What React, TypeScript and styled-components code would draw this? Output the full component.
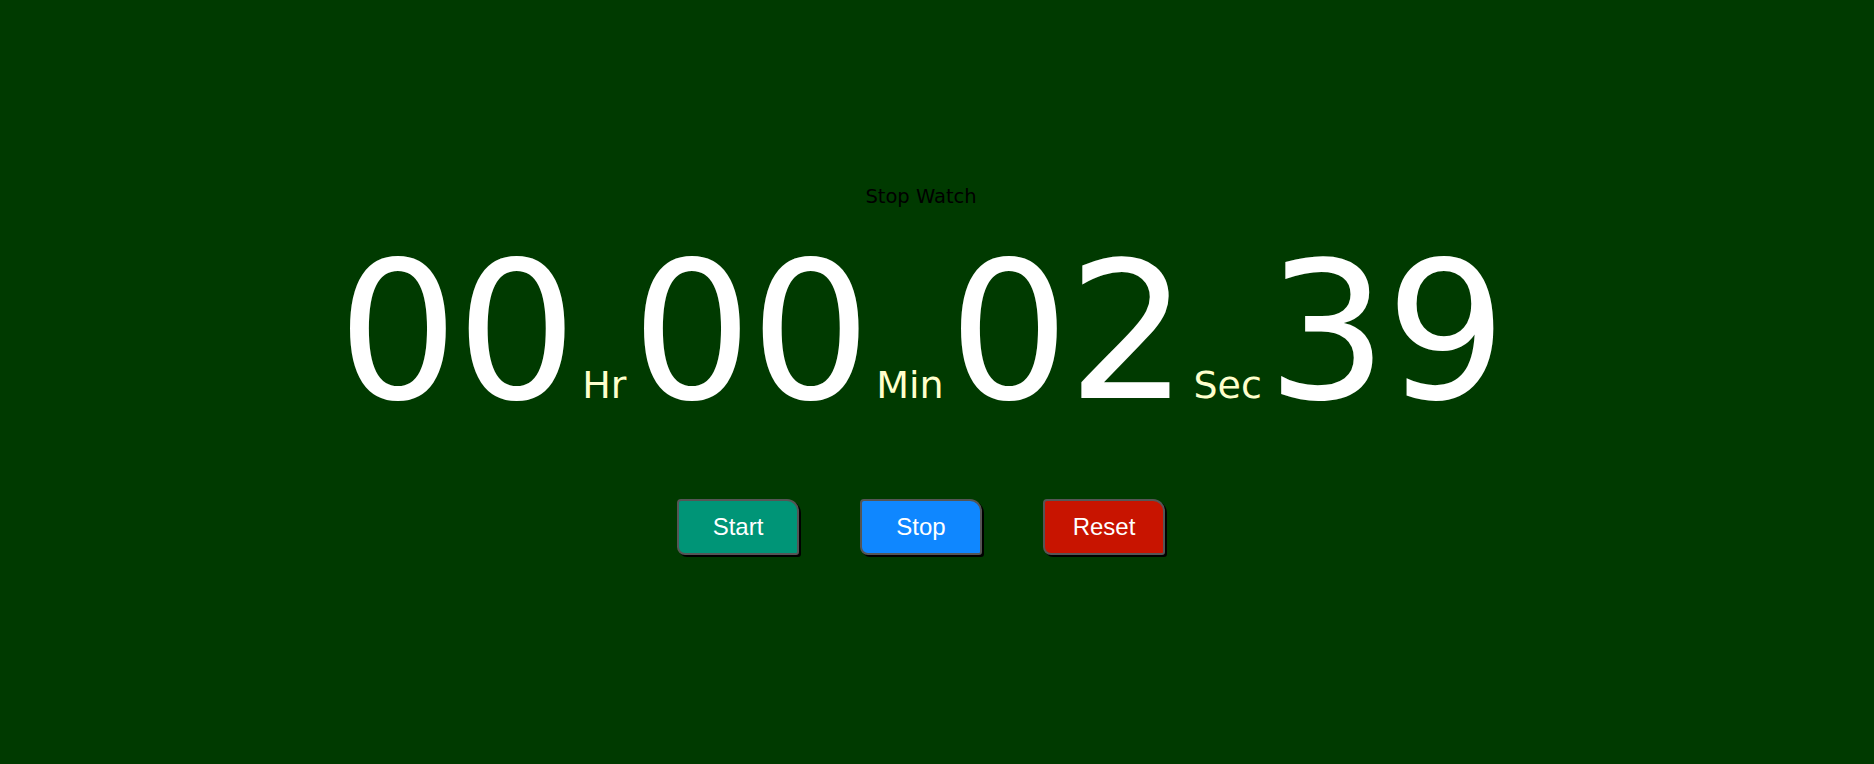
import React from "react";
import styled, { createGlobalStyle } from "styled-components";

const GlobalStyle = createGlobalStyle`
  html, body {
    margin: 0;
    padding: 0;
    background: #003a00;
    height: 100%;
  }
  #root {
    min-height: 100vh;
  }
`;

const Page = styled.main`
  min-height: 100vh;
  box-sizing: border-box;
  display: flex;
  flex-direction: column;
  align-items: center;
  padding-top: 185px;
  padding-right: 32px;
  background: #003a00;
`;

const Title = styled.h1`
  margin: 0;
  font-family: "DejaVu Sans", Verdana, sans-serif;
  font-weight: normal;
  font-size: 19.5px;
  color: #000;
`;

const Clock = styled.div`
  display: flex;
  align-items: baseline;
  margin-top: 30px;
  line-height: 1;
  font-family: "DejaVu Sans", Verdana, sans-serif;
`;

const Digits = styled.span`
  font-size: 190px;
  letter-spacing: -2px;
  color: #ffffff;
`;

const Unit = styled.span`
  font-size: 38px;
  color: #ffffcc;
  margin: 0 5px 0 7px;
`;

const Controls = styled.div`
  display: flex;
  gap: 61px;
  margin-top: 71px;
`;

const Button = styled.button<{ $bg: string }>`
  width: 122px;
  height: 56px;
  box-sizing: border-box;
  border: 2px solid #555555;
  border-radius: 4px 12px 3px 8px;
  box-shadow: 2px 2px 0 #000;
  background: ${(p) => p.$bg};
  color: #ffffff;
  font-family: "Liberation Sans", Arial, sans-serif;
  font-size: 24px;
  cursor: pointer;
  padding: 0;
`;

export default function App() {
  return (
    <>
      <GlobalStyle />
      <Page>
        <Title>Stop Watch</Title>
        <Clock>
          <Digits>00</Digits>
          <Unit>Hr</Unit>
          <Digits>00</Digits>
          <Unit>Min</Unit>
          <Digits>02</Digits>
          <Unit>Sec</Unit>
          <Digits>39</Digits>
        </Clock>
        <Controls>
          <Button $bg="#009577">Start</Button>
          <Button $bg="#0f87ff">Stop</Button>
          <Button $bg="#c81400">Reset</Button>
        </Controls>
      </Page>
    </>
  );
}
